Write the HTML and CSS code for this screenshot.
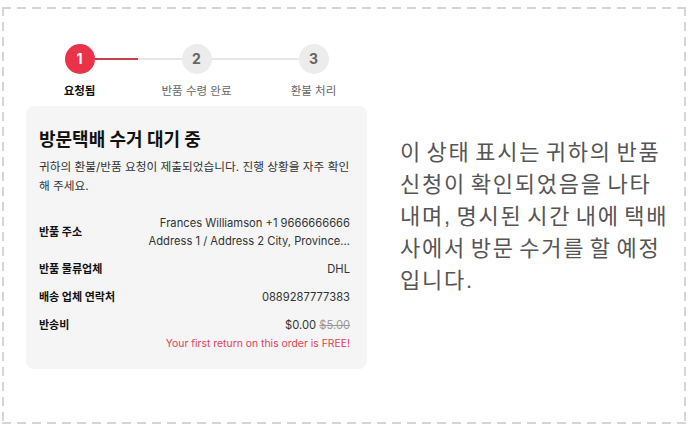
FILE: index.html
```html
<!DOCTYPE html>
<html lang="ko">
<head>
<meta charset="utf-8">
<title>반품 상태</title>
<link rel="stylesheet" href="styles.css">
</head>
<body>
<div class="frame">
  <div class="left">
    <div class="stepper">
      <div class="step done">
        <span class="dot">1</span>
        <span class="label">요청됨</span>
      </div>
      <div class="step">
        <span class="dot">2</span>
        <span class="label">반품 수령 완료</span>
      </div>
      <div class="step">
        <span class="dot">3</span>
        <span class="label">환불 처리</span>
      </div>
    </div>
    <div class="card">
      <h2 class="title">방문택배 수거 대기 중</h2>
      <p class="desc">귀하의 환불/반품 요청이 제출되었습니다. 진행 상황을 자주 확인해 주세요.</p>
      <dl class="rows">
        <div class="row">
          <dt>반품 주소</dt>
          <dd>Frances Williamson +1 9666666666<br>Address 1 / Address 2 City, Province...</dd>
        </div>
        <div class="row">
          <dt>반품 물류업체</dt>
          <dd>DHL</dd>
        </div>
        <div class="row">
          <dt>배송 업체 연락처</dt>
          <dd>0889287777383</dd>
        </div>
        <div class="row fee">
          <dt>반송비</dt>
          <dd>$0.00 <s class="old">$5.00</s><span class="free">Your first return on this order is FREE!</span></dd>
        </div>
      </dl>
    </div>
  </div>
  <p class="note">이 상태 표시는 귀하의 반품<br>신청이 확인되었음을 나타<br>내며, 명시된 시간 내에 택배<br>사에서 방문 수거를 할 예정<br>입니다.</p>
</div>
</body>
</html>
```
FILE: styles.css
```css
html, body {
  margin: 0;
  padding: 0;
  background: #ffffff;
}
body {
  font-family: "Inter", "Noto Sans CJK KR", sans-serif;
  color: #222;
}
.frame {
  box-sizing: border-box;
  width: 684px;
  height: 417px;
  margin: 7px 0 0 2px;
  padding: 37px 0 0 24px;
  display: flex;
  align-items: flex-start;
  background:
    repeating-linear-gradient(90deg, #d5d5d5 0 9px, transparent 9px 15px) left top / 100% 2px no-repeat,
    repeating-linear-gradient(90deg, #d5d5d5 0 9px, transparent 9px 15px) left bottom / 100% 2px no-repeat,
    repeating-linear-gradient(180deg, #d5d5d5 0 9px, transparent 9px 15px) left top / 2px 100% no-repeat,
    repeating-linear-gradient(180deg, #d5d5d5 0 9px, transparent 9px 15px) right top / 2px 100% no-repeat;
}
.left {
  width: 341px;
  flex: none;
}
.stepper {
  display: grid;
  grid-template-columns: repeat(3, 117px);
  margin: 0 -5px;
}
.step {
  position: relative;
  display: flex;
  flex-direction: column;
  align-items: center;
}
.step::before,
.step::after {
  content: "";
  position: absolute;
  top: 14px;
  height: 2px;
  width: 50%;
  background: #e6e6e6;
}
.step::before { left: 0; }
.step::after { right: 0; }
.step:first-child::before,
.step:last-child::after { display: none; }
.step.done::after { background: #c8404f; }
.dot {
  position: relative;
  z-index: 1;
  width: 30px;
  height: 30px;
  border-radius: 50%;
  background: #ececec;
  color: #666;
  font-size: 14px;
  font-weight: 700;
  line-height: 30px;
  text-align: center;
}
.step.done .dot {
  background: #ea3349;
  color: #fff;
}
.label {
  margin-top: 9px;
  font-size: 11.5px;
  line-height: 16px;
  color: #666;
}
.step.done .label {
  color: #111;
  font-weight: 700;
}
.card {
  margin-top: 7px;
  background: #f5f5f5;
  border-radius: 8px;
  padding: 22px 17px 16px 13px;
}
.title {
  margin: 0;
  font-size: 18px;
  line-height: 24px;
  font-weight: 700;
  color: #111;
}
.desc {
  margin: 6px 0 0;
  font-size: 11.7px;
  line-height: 19px;
  color: #333;
}
.rows {
  margin: 18px 0 0;
  display: flex;
  flex-direction: column;
  gap: 10px;
}
.row {
  display: flex;
  justify-content: space-between;
  align-items: center;
}
.row dt {
  font-size: 11px;
  line-height: 18px;
  font-weight: 700;
  color: #111;
}
.row dd {
  margin: 0;
  text-align: right;
  font-size: 11.2px;
  line-height: 18px;
  color: #333;
}
.row.fee { align-items: flex-start; }
.old {
  color: #999;
}
.free {
  display: block;
  font-size: 10.4px;
  color: #e4405a;
  line-height: 19px;
}
.note {
  margin: 93px 0 0 33px;
  width: 295px;
  font-family: "Liberation Sans", "Noto Sans CJK KR", sans-serif;
  font-size: 22px;
  letter-spacing: 1.8px;
  word-spacing: -3.4px;
  line-height: 32px;
  color: #555;
}
```
